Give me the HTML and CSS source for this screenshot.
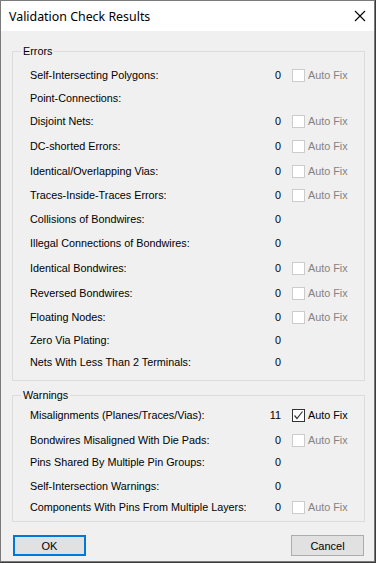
FILE: index.html
```html
<!DOCTYPE html>
<html lang="en">
<head>
  <meta charset="UTF-8">
  <title>Validation Check Results</title>
  <link rel="stylesheet" href="styles.css">
</head>
<body>

  <div class="dialog">
    <div class="titlebar">
      <span class="title">Validation Check Results</span>
      <svg class="close" width="12" height="12" viewBox="0 0 12 12">
        <path d="M1 1 L11 11 M11 1 L1 11" stroke="#000" stroke-width="1.1" fill="none"/>
      </svg>
    </div>

    <div class="content">
      <fieldset class="group errors">
        <legend>Errors</legend>
        <div class="row m3"><span class="label">Self-Intersecting Polygons:</span><span class="value">0</span><span class="fix off"><span class="box"></span>Auto Fix</span></div>
        <div class="row m3"><span class="label">Point-Connections:</span></div>
        <div class="row m5"><span class="label">Disjoint Nets:</span><span class="value">0</span><span class="fix off"><span class="box"></span>Auto Fix</span></div>
        <div class="row m5"><span class="label">DC-shorted Errors:</span><span class="value">0</span><span class="fix off"><span class="box"></span>Auto Fix</span></div>
        <div class="row"><span class="label">Identical/Overlapping Vias:</span><span class="value">0</span><span class="fix off"><span class="box"></span>Auto Fix</span></div>
        <div class="row"><span class="label">Traces-Inside-Traces Errors:</span><span class="value">0</span><span class="fix off"><span class="box"></span>Auto Fix</span></div>
        <div class="row"><span class="label">Collisions of Bondwires:</span><span class="value">0</span></div>
        <div class="row m5"><span class="label">Illegal Connections of Bondwires:</span><span class="value">0</span></div>
        <div class="row m5"><span class="label">Identical Bondwires:</span><span class="value">0</span><span class="fix off"><span class="box"></span>Auto Fix</span></div>
        <div class="row"><span class="label">Reversed Bondwires:</span><span class="value">0</span><span class="fix off"><span class="box"></span>Auto Fix</span></div>
        <div class="row m3"><span class="label">Floating Nodes:</span><span class="value">0</span><span class="fix off"><span class="box"></span>Auto Fix</span></div>
        <div class="row m2"><span class="label">Zero Via Plating:</span><span class="value">0</span></div>
        <div class="row last"><span class="label">Nets With Less Than 2 Terminals:</span><span class="value">0</span></div>
      </fieldset>

      <fieldset class="group warnings">
        <legend>Warnings</legend>
        <div class="row m5"><span class="label">Misalignments (Planes/Traces/Vias):</span><span class="value">11</span><span class="fix"><span class="box checked"><svg width="11" height="11" viewBox="0 0 11 11"><path d="M1.5 5.5 L4 8.5 L9.5 1.5" stroke="#333" stroke-width="1.2" fill="none"/></svg></span>Auto Fix</span></div>
        <div class="row m2"><span class="label">Bondwires Misaligned With Die Pads:</span><span class="value">0</span><span class="fix off"><span class="box"></span>Auto Fix</span></div>
        <div class="row"><span class="label">Pins Shared By Multiple Pin Groups:</span><span class="value">0</span></div>
        <div class="row m1"><span class="label">Self-Intersection Warnings:</span><span class="value">0</span></div>
        <div class="row last"><span class="label">Components With Pins From Multiple Layers:</span><span class="value">0</span><span class="fix off"><span class="box"></span>Auto Fix</span></div>
      </fieldset>

      <div class="buttons">
        <button class="btn default">OK</button>
        <button class="btn">Cancel</button>
      </div>
    </div>
  </div>

</body>
</html>
```

FILE: styles.css
```css
* {
  box-sizing: border-box;
}

body {
  margin: 0;
  background: #3c3c3c;
  font-family: "Liberation Sans", Arial, sans-serif;
  font-size: 10.8px;
  color: #000;
}

.dialog {
  width: 375px;
  height: 562px;
  border: 1px solid #7a7a7a;
  background: #f0f0f0;
  display: flex;
  flex-direction: column;
}

.titlebar {
  height: 30px;
  background: #fff;
  display: flex;
  align-items: center;
  justify-content: space-between;
  padding: 0 8px;
  flex-shrink: 0;
}

.title {
  font-family: "Noto Sans", sans-serif;
  font-size: 12.4px;
}

.content {
  padding: 13px 9px 0 11px;
  display: flex;
  flex-direction: column;
}

.group {
  margin: 0;
  border: 1px solid #dcdcdc;
  min-width: 0;
}

.group legend {
  padding: 0 2px;
  line-height: 15px;
}

.errors {
  padding: 6px 0 8px 8px;
}

.warnings {
  margin-top: 7px;
  padding: 2px 0 4px 8px;
}

.row {
  display: grid;
  grid-template-columns: minmax(0, 1fr) 40px 83px;
  align-items: center;
  height: 20px;
  margin-bottom: 4px;
  padding-left: 9px;
}

.row.m1 { margin-bottom: 1px; }
.row.m2 { margin-bottom: 2px; }
.row.m3 { margin-bottom: 3px; }
.row.m5 { margin-bottom: 5px; }
.row.last { margin-bottom: 0; }

.label {
  white-space: nowrap;
}

.value {
  text-align: right;
}

.fix {
  padding-left: 11px;
  display: flex;
  align-items: center;
  white-space: nowrap;
}

.fix.off {
  color: #838383;
}

.box {
  width: 13px;
  height: 13px;
  margin-right: 3px;
  border: 1px solid #cccccc;
  background: #fff;
  display: flex;
  align-items: center;
  justify-content: center;
}

.box.checked {
  border-color: #333;
}

.buttons {
  margin-top: 13px;
  display: flex;
  justify-content: space-between;
  padding: 0 1px;
}

.btn {
  width: 73px;
  height: 21px;
  background: #e1e1e1;
  border: 1px solid #adadad;
  font: inherit;
  font-size: 11px;
  padding: 0;
  color: #000;
}

.btn.default {
  border: 2px solid #0078d7;
}
```
